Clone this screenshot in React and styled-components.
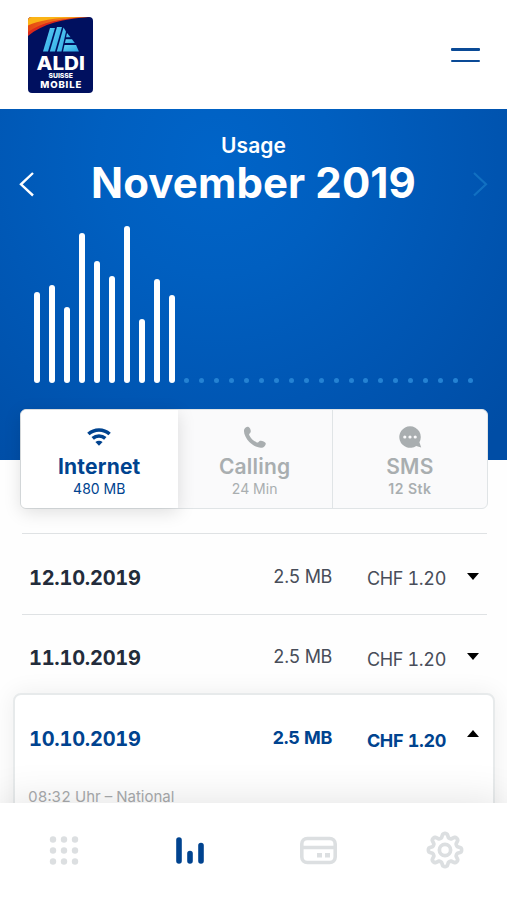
import React, { useState } from "react";
import styled, { createGlobalStyle } from "styled-components";

const GlobalStyle = createGlobalStyle`
  * {
    box-sizing: border-box;
  }

  body {
    margin: 0;
    background: #fff;
    font-family: Inter, "Liberation Sans", sans-serif;
  }

  button {
    padding: 0;
    border: none;
    background: none;
    font: inherit;
    cursor: pointer;
  }
`;

const Screen = styled.div`
  display: flex;
  flex-direction: column;
  width: 507px;
  height: 900px;
  overflow: hidden;
  background: #fefefe;
`;

const Header = styled.header`
  display: flex;
  flex: none;
  justify-content: space-between;
  align-items: flex-start;
  height: 109px;
  padding: 16px 27px 0;
  background: #fff;
`;

const Burger = styled.button`
  display: flex;
  flex-direction: column;
  justify-content: space-between;
  width: 29px;
  height: 14px;
  margin-top: 32px;

  span {
    height: 2.5px;
    border-radius: 1px;
    background: #0a4a96;
  }
`;

const Hero = styled.section`
  flex: none;
  height: 351px;
  background: radial-gradient(
    circle 390px at 215px 50px,
    #0064c8 0%,
    #005fc0 30%,
    #0056b3 65%,
    #004da5 100%
  );
`;

const MonthBar = styled.div`
  display: flex;
  justify-content: space-between;
  align-items: flex-start;
  height: 117px;
  padding: 24px 19px 0;
`;

const Arrow = styled.button`
  display: flex;
  margin-top: 38px;
  opacity: ${({ $disabled }) => ($disabled ? 0.65 : 1)};
  color: ${({ $disabled }) => ($disabled ? "#1b7fcb" : "#fff")};
`;

const Month = styled.div`
  color: #fff;
  text-align: center;

  p {
    margin: 0;
    font-size: 21px;
    font-weight: 600;
    line-height: 26px;
    letter-spacing: 0.1px;
  }

  h1 {
    margin: 0;
    font-size: 42px;
    font-weight: 700;
    line-height: 48px;
    letter-spacing: 0.1px;
  }
`;

const Chart = styled.div`
  display: flex;
  justify-content: space-between;
  align-items: flex-end;
  height: 157px;
  padding: 0 33px 0 34px;
`;

const Bar = styled.span`
  width: 6px;
  border-radius: 3px;
  background: #fff;
`;

const Dot = styled.span`
  width: 5px;
  height: 5px;
  margin: 0 0.5px;
  border-radius: 50%;
  background: #2482d3;
`;

const Tabs = styled.div`
  display: flex;
  flex: none;
  position: relative;
  height: 100px;
  margin: -51px 19px 0 20px;
  border: 1px solid #e0e4e6;
  border-radius: 6px;
  background: #fafafb;
`;

const Tab = styled.button`
  display: flex;
  flex: ${({ $active }) => ($active ? "0 0 156.5px" : 1)};
  flex-direction: column;
  align-items: center;
  padding-top: 15px;
  border-left: ${({ $divided }) => ($divided ? "1px solid #e0e4e6" : "none")};
  border-radius: ${({ $active }) => ($active ? "5px 0 0 5px" : 0)};
  background: ${({ $active }) => ($active ? "#fff" : "transparent")};
  box-shadow: ${({ $active }) =>
    $active ? "0 4px 18px rgba(0, 0, 0, 0.13)" : "none"};
  color: ${({ $active }) => ($active ? "#00438f" : "#a9aeb0")};

  svg {
    height: 24px;
  }

  strong {
    font-size: 21px;
    font-weight: ${({ $active }) => ($active ? 700 : 600)};
    line-height: 25px;
    margin-top: 5px;
    letter-spacing: 0.2px;
  }

  span {
    font-size: 14px;
    font-weight: ${({ $strong }) => ($strong ? 600 : 400)};
    line-height: 19px;
    letter-spacing: ${({ $strong }) => ($strong ? "0.5px" : 0)};
  }
`;

const List = styled.main`
  flex: 1;
  min-height: 0;
  padding-top: 24px;
  font-variant-numeric: tabular-nums;
`;

const Row = styled.div`
  display: flex;
  align-items: flex-start;
  height: 80.5px;
  margin: 0 20px 0 22px;
  padding: 33.5px 8px 0 7px;
  border-top: 1px solid #dfe2e4;
`;

const DayCard = styled.div`
  height: 140px;
  margin: -1px 12px 0 13px;
  border: 2px solid #e7eaeb;
  border-radius: 8px;
  background: #fff;
  box-shadow: 0 0 24px rgba(0, 0, 0, 0.07);
`;

const DayHead = styled.div`
  display: flex;
  align-items: flex-start;
  padding: 34px 14px 0 14px;
`;

const DateLabel = styled.strong`
  flex: 1;
  color: ${({ $open }) => ($open ? "#00438f" : "#232c3b")};
  font-size: 20px;
  font-weight: 650;
  line-height: 20px;
  letter-spacing: -0.25px;
`;

const Value = styled.span`
  width: ${({ $width }) => $width}px;
  margin-top: ${({ $drop }) => $drop}px;
  color: ${({ $open }) => ($open ? "#00438f" : "#484d59")};
  font-size: 18px;
  font-weight: ${({ $open }) => ($open ? 650 : 400)};
  line-height: 20px;
  letter-spacing: -0.35px;
  text-align: right;
  white-space: nowrap;
`;

const Caret = styled.svg`
  width: 12px;
  height: 7px;
  margin: ${({ $up }) => ($up ? "1px" : "5px")} 0 0 21px;
`;

const CallInfo = styled.p`
  margin: 36px 0 0 13px;
  color: #a9abad;
  font-size: 15px;
  line-height: 20px;
`;

const Nav = styled.nav`
  display: grid;
  grid-template-columns: repeat(4, 127px);
  flex: none;
  position: relative;
  align-items: center;
  justify-items: center;
  height: 97px;
  padding-bottom: 3px;
  background: #fff;
  box-shadow: 0 0 44px rgba(0, 0, 0, 0.12);
`;

const NavItem = styled.button`
  display: flex;
  color: ${({ $active }) => ($active ? "#00438f" : "#dcdfe1")};
`;

const Logo = () => (
  <svg width="67" height="78" viewBox="27 16 67 78">
    <defs>
      <clipPath id="logoShape">
        <rect x="28" y="17" width="65" height="76" rx="4" />
      </clipPath>
      <linearGradient id="logoBlue" x1="0" y1="0" x2="1" y2="1">
        <stop offset="0" stopColor="#62d5f5" />
        <stop offset="1" stopColor="#2ba4e3" />
      </linearGradient>
      <linearGradient id="logoWarm" x1="0" y1="0" x2="1" y2="0">
        <stop offset="0" stopColor="#e64713" />
        <stop offset="1" stopColor="#f6a21a" />
      </linearGradient>
    </defs>
    <g clipPath="url(#logoShape)">
      <rect x="28" y="17" width="65" height="76" fill="#00105f" />
      <path d="M28 17H90C64 18.5 42 24 28 36Z" fill="#d9291c" />
      <path d="M28 17H88C62 18 41 22.5 28 32Z" fill="url(#logoWarm)" />
      <path d="M28 17H76C55 18 38 20.5 28 25.5Z" fill="#fbb416" />
    </g>
    <g fill="url(#logoBlue)">
      <path d="M50 28h5L48 51.5h-5z" />
      <path d="M57 27h5L55 51.5h-5.2z" />
      <path d="M63.5 27.5l2.5 4-4.5 20H56.8z" />
      <path d="M67 33l3.6 4.2h-4.5z" />
      <path d="M65.8 39.2h6.2l2.8 3.7h-9.9z" />
      <path d="M64.5 45h11.6l2.8 6.5H63z" />
    </g>
    <g fill="#fff" fontFamily="Inter, sans-serif" fontWeight="800">
      <text x="36.5" y="69.8" fontSize="18.5" textLength="48.5" lengthAdjust="spacingAndGlyphs">
        ALDI
      </text>
      <text x="48.5" y="77.7" fontSize="6.8" textLength="24.5" lengthAdjust="spacingAndGlyphs">
        SUISSE
      </text>
      <text x="40.3" y="87.7" fontSize="9.6" textLength="41" lengthAdjust="spacing">
        MOBILE
      </text>
    </g>
  </svg>
);

const WifiIcon = () => (
  <svg width="24" height="24" viewBox="0 0 24 24" fill="none" stroke="currentColor" strokeWidth="3.6">
    <path d="M1.4 9C7.4 3.6 16.6 3.6 22.6 9" />
    <path d="M5.7 13.4C9.3 10.2 14.7 10.2 18.3 13.4" />
    <path d="M8.4 16.9C10.5 15.2 13.5 15.2 15.6 16.9L12 20.7Z" fill="currentColor" stroke="none" />
  </svg>
);

const PhoneIcon = () => (
  <svg width="24" height="24" viewBox="0 0 24 24" fill="currentColor">
    <path d="M1.3 4.2C2.2 2.3 4.2 1.2 5.6 2C7.5 3 8.4 6.3 7.3 7.7C6.5 8.7 5.7 9 6.3 10.2C7.7 13.3 10.5 16 13.8 17.4C15 17.9 15.3 17 16.3 16.2C17.8 15.1 21.7 16.3 22.6 18.1C23.2 19.5 21.9 21.6 20 22.4C16.3 23.9 10 20.7 6.3 17C2.6 13.3 0 7.2 1.3 4.2Z" />
  </svg>
);

const SmsIcon = () => (
  <svg width="24" height="24" viewBox="0 0 24 24">
    <path
      d="M12 1.2a10.8 10.8 0 1 0 6.2 19.7l5 1.6-1.8-5.2A10.8 10.8 0 0 0 12 1.2Z"
      fill="currentColor"
    />
    <g fill="#fafafb">
      <circle cx="6.8" cy="12" r="1.6" />
      <circle cx="12" cy="12" r="1.6" />
      <circle cx="17.2" cy="12" r="1.6" />
    </g>
  </svg>
);

const GridIcon = () => (
  <svg width="32" height="32" viewBox="0 0 32 32" fill="currentColor">
    {[5.5, 16.5, 27.5].map((y) =>
      [5, 16, 27].map((x) => <circle key={`${x}-${y}`} cx={x} cy={y} r="3.2" />)
    )}
  </svg>
);

const UsageIcon = () => (
  <svg width="32" height="32" viewBox="0 0 32 32" stroke="currentColor" strokeWidth="5.6" strokeLinecap="round">
    <path d="M4 6V27M15 19.5V27M26 11.5V27" />
  </svg>
);

const CardIcon = () => (
  <svg width="38" height="30" viewBox="0 0 38 30" fill="none" stroke="currentColor" strokeWidth="3.6">
    <rect x="2.8" y="3.5" width="33.4" height="24" rx="5.5" />
    <path d="M2.5 12.5H36.5" />
    <path d="M18 20.3h5M26 20.3h5" strokeWidth="4.6" />
  </svg>
);

// eight rounded teeth around the hub
const GEAR_PATH = Array.from({ length: 97 }, (_, i) => {
  const angle = (i / 96) * Math.PI * 2;
  const radius = 14.5 + 2.2 * Math.tanh(1.8 * Math.cos(angle * 8));
  const x = 20 + radius * Math.sin(angle);
  const y = 20 - radius * Math.cos(angle);
  return `${i ? "L" : "M"}${x.toFixed(2)} ${y.toFixed(2)}`;
}).join("");

const GearIcon = () => (
  <svg width="40" height="40" viewBox="0 0 40 40" fill="none" stroke="currentColor" strokeWidth="3.7" strokeLinejoin="round">
    <path d={GEAR_PATH + "Z"} />
    <circle cx="20" cy="20" r="5.6" />
  </svg>
);

const usage = [91, 98, 76, 150, 122, 107, 157, 64, 104, 88];
const restDays = 20;

const tabs = [
  { name: "Internet", amount: "480 MB", Icon: WifiIcon },
  { name: "Calling", amount: "24 Min", Icon: PhoneIcon },
  { name: "SMS", amount: "12 Stk", Icon: SmsIcon, strong: true },
];

const days = ["12.10.2019", "11.10.2019"];

const navIcons = [GridIcon, UsageIcon, CardIcon, GearIcon];

const DayValues = ({ date, open }) => (
  <>
    <DateLabel $open={open}>{date}</DateLabel>
    <Value $width={90} $drop={-1} $open={open}>
      2.5 MB
    </Value>
    <Value $width={114} $drop={1.5} $open={open}>
      CHF 1.20
    </Value>
    <Caret $up={open} viewBox="0 0 12 7">
      <path d={open ? "M0 7L6 0L12 7Z" : "M0 0H12L6 7Z"} />
    </Caret>
  </>
);

export default function App() {
  const [tab, setTab] = useState(0);
  const [page, setPage] = useState(1);

  return (
    <Screen>
      <GlobalStyle />
      <Header>
        <Logo />
        <Burger>
          <span />
          <span />
        </Burger>
      </Header>
      <Hero>
        <MonthBar>
          <Arrow>
            <svg width="16" height="26" viewBox="0 0 16 26" fill="none" stroke="currentColor" strokeWidth="2.4">
              <path d="M14 2L2 13.3L14 24.5" />
            </svg>
          </Arrow>
          <Month>
            <p>Usage</p>
            <h1>November 2019</h1>
          </Month>
          <Arrow $disabled>
            <svg width="16" height="26" viewBox="0 0 16 26" fill="none" stroke="currentColor" strokeWidth="2.2">
              <path d="M2 2L14 13.3L2 24.5" />
            </svg>
          </Arrow>
        </MonthBar>
        <Chart>
          {usage.map((value, idx) => (
            <Bar key={idx} style={{ height: value }} />
          ))}
          {Array.from({ length: restDays }, (_, idx) => (
            <Dot key={idx} />
          ))}
        </Chart>
      </Hero>
      <Tabs>
        {tabs.map(({ name, amount, Icon, strong }, idx) => (
          <Tab
            key={name}
            $active={idx === tab}
            $divided={idx > 1}
            $strong={strong}
            onClick={() => setTab(idx)}
          >
            <Icon />
            <strong>{name}</strong>
            <span>{amount}</span>
          </Tab>
        ))}
      </Tabs>
      <List>
        {days.map((date) => (
          <Row key={date}>
            <DayValues date={date} />
          </Row>
        ))}
        <DayCard>
          <DayHead>
            <DayValues date="10.10.2019" open />
          </DayHead>
          <CallInfo>08:32 Uhr – National</CallInfo>
        </DayCard>
      </List>
      <Nav>
        {navIcons.map((Icon, idx) => (
          <NavItem key={idx} $active={idx === page} onClick={() => setPage(idx)}>
            <Icon />
          </NavItem>
        ))}
      </Nav>
    </Screen>
  );
}
